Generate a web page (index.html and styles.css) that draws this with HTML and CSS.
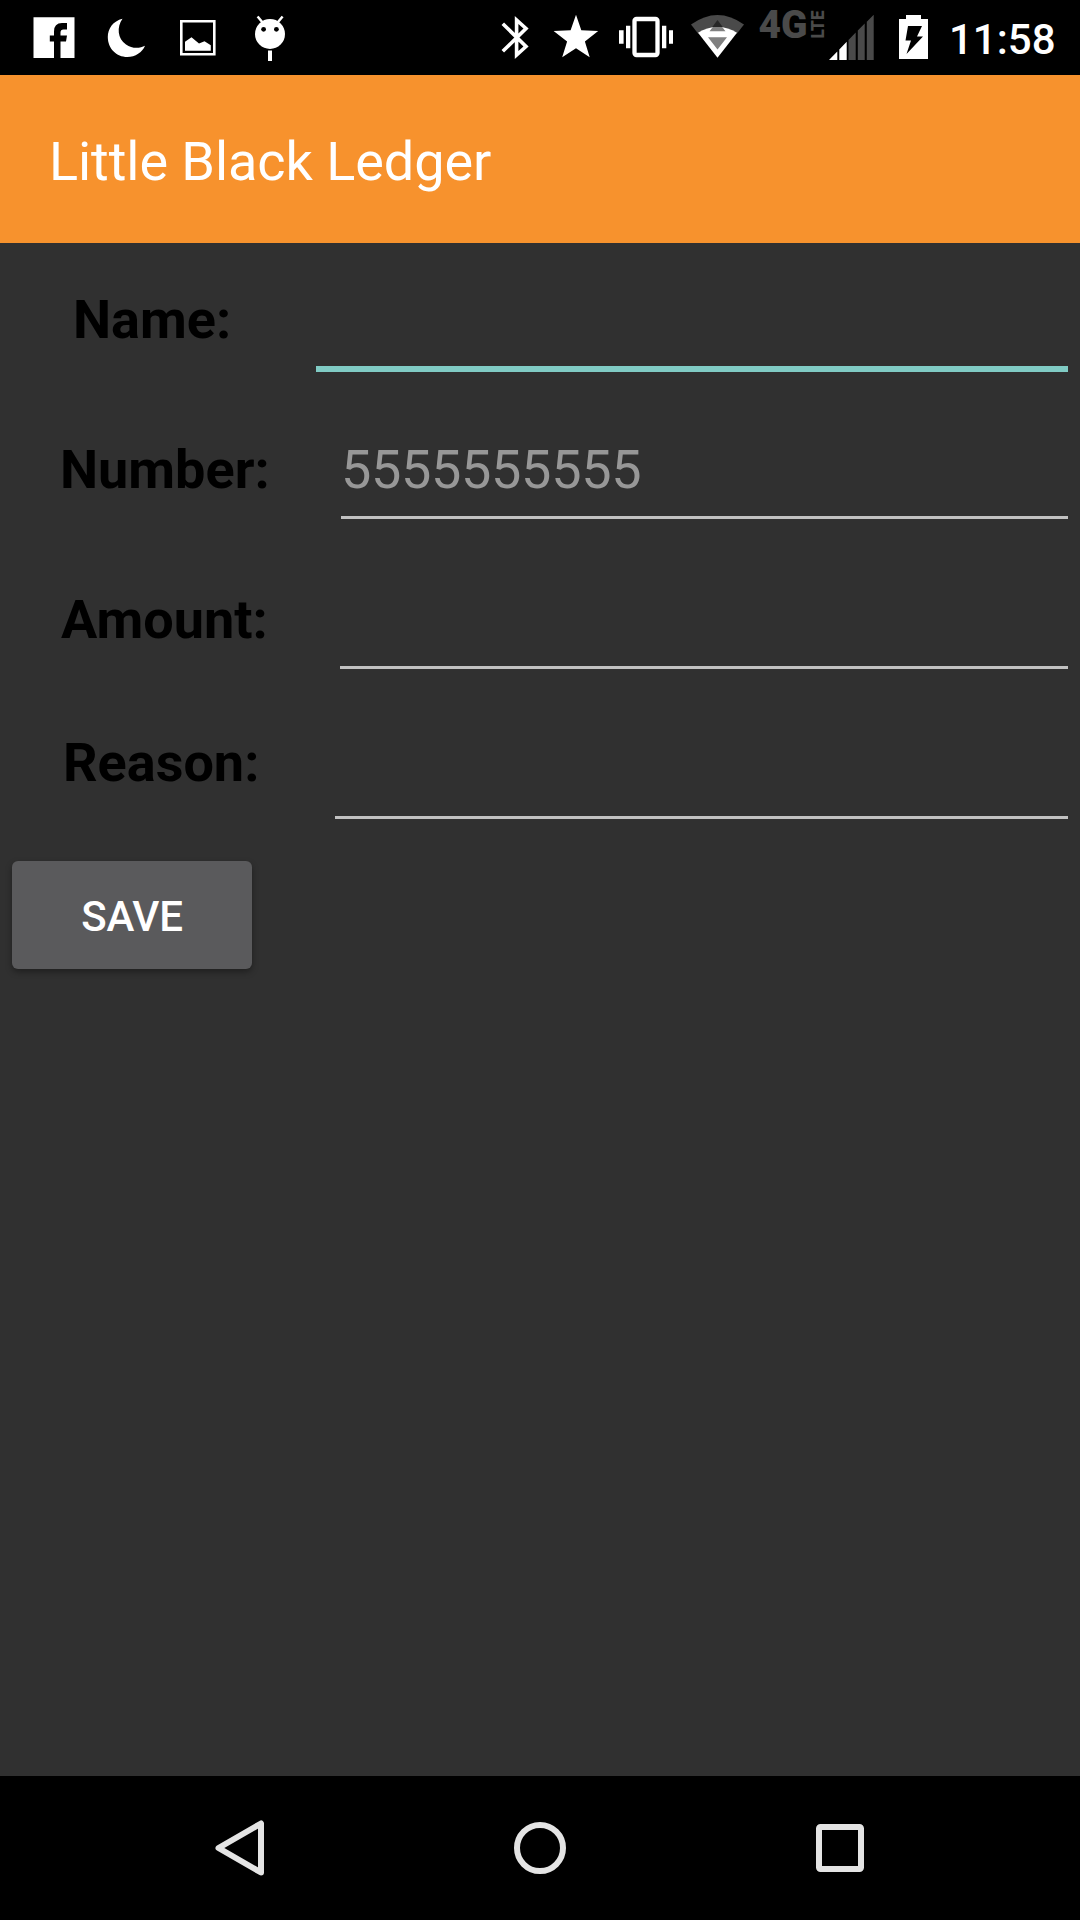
FILE: index.html
```
<!DOCTYPE html>
<html lang="en">
<head>
<meta charset="utf-8">
<title>Little Black Ledger</title>
<link rel="stylesheet" href="styles.css">
</head>
<body>
<div class="screen">
  <header class="status-bar">
    <div class="notifications">
      <svg width="90" height="75" viewBox="0 0 90 75"><path fill="#fff" d="M33.5 17.3h41V58H60.500V41.500h5.500l1-6h-6.500v-3q0-3 3-3H67v-6.500h-5q-8 0-8 8.500v4h-4.200v6H54V58H33.500z"/></svg>
      <svg width="70" height="75" viewBox="90 0 70 75"><path fill="#fff" d="M122.500 18.700C113 21 107.800 28.500 107.800 37c0 11.500 8.700 20 19.500 20 8 0 15-4.500 17.700-11.200C140 48.500 132 49 126 44.500c-8.500-6-9.500-17.500-3.500-25.800z"/></svg>
      <svg width="75" height="75" viewBox="160 0 75 75"><path fill="none" stroke="#fff" stroke-width="2.600" d="M181.300 21.300h33v33h-33z"/><path fill="#fff" d="M185 50.700v-9l6.500-4.400 7.500 6.200 5.500-2.300 6.300 4v5.500z"/></svg>
      <svg width="70" height="75" viewBox="235 0 70 75"><g stroke="#fff"><path stroke-width="2.500" d="M257.600 16.500l5 6m20-6l-5 6"/><path stroke-width="4" d="M270 50.500V61"/></g><circle cx="270" cy="34" r="15" fill="#fff"/><circle cx="263.600" cy="29.300" r="2.400"/><circle cx="276.400" cy="29.300" r="2.400"/></svg>
    </div>
    <div class="system">
      <svg width="55" height="75" viewBox="490 0 55 75"><path fill="none" stroke="#fff" stroke-width="3.600" d="M502.800 23.800L526 46.500 516.600 55V20l9.400 8.500L502.800 51.300"/></svg>
      <svg width="65" height="75" viewBox="545 0 65 75"><path fill="#fff" d="M576 14.700l5.300 15.600 16.900.7-13.300 10.500 4.800 15.700L576 48.300l-13.800 8.900 4.900-15.700L553.600 31l17-.7z"/></svg>
      <svg width="72" height="75" viewBox="610 0 72 75"><rect x="634.500" y="19" width="23" height="36" rx="2" fill="none" stroke="#fff" stroke-width="4.300"/><path fill="#fff" d="M619 30.300h4.600v13.500H619zm7-4.600h4.300v22.500H626zm36 0h4.300v22.500H662zm7 4.600h4v13.500h-4z"/></svg>
      <svg width="73" height="75" viewBox="682 0 73 75"><path fill="#4a4a4a" d="M691 24.500Q717.500 5.500 744 24.500L737 33.500H698z"/><path fill="#fff" d="M698 32.700Q707 27 717.500 27T737 32.700L717.500 57.700z"/><path fill="#808080" d="M709.500 31.300l3.300-4.300h9.400l3.300 4.300zm-1.500 5.900h19l-9.500 12.300z"/><path fill="#262626" d="M717.500 20l5.200 7h-10.400z"/></svg>
      <svg class="network" width="74" height="75" viewBox="755 0 74 75"><text x="758.500" y="38" textLength="49" lengthAdjust="spacingAndGlyphs" font-size="38">4G</text><text transform="translate(823.500 38.500) rotate(-90)" textLength="28" lengthAdjust="spacingAndGlyphs" font-size="18.500">LTE</text></svg>
      <svg width="56" height="75" viewBox="829 0 56 75"><path fill="#fff" d="M829 60l8.300-8.500V60zm10.300 0V49.500l7.400-7.700V60z"/><path fill="#4a4a4a" d="M848.500 60V40l7.200-7.500V60zm9.300 0V30.600l6.900-7V60zm9 0V21.700l6.900-7V60z"/></svg>
      <svg width="55" height="75" viewBox="885 0 55 75"><path fill="#fff" d="M899 19h7v-4h15v4h7v40h-29z"/><path d="M908 26h14l-5 10.500h6L906.500 54l4.500-13.500h-5.500z"/></svg>
      <span class="clock">11:58</span>
    </div>
  </header>

  <div class="toolbar"><h1 class="title">Little Black Ledger</h1></div>

  <main class="form">
    <div class="row name">
      <label class="label" for="name">Name:</label>
      <input class="field focused" id="name" type="text">
    </div>
    <div class="row number">
      <label class="label" for="number">Number:</label>
      <input class="field" id="number" type="tel" placeholder="5555555555">
    </div>
    <div class="row amount">
      <label class="label" for="amount">Amount:</label>
      <input class="field" id="amount" type="text">
    </div>
    <div class="row reason">
      <label class="label" for="reason">Reason:</label>
      <input class="field" id="reason" type="text">
    </div>
    <button class="save" type="button">SAVE</button>
  </main>

  <nav class="nav-bar">
    <svg width="60" height="60" viewBox="0 0 60 60"><path d="M51 5.500v49L8.500 30z"/></svg>
    <svg width="60" height="60" viewBox="0 0 60 60"><circle cx="30" cy="30" r="23"/></svg>
    <svg width="60" height="60" viewBox="0 0 60 60"><rect x="9" y="9" width="42" height="42" rx="1.500"/></svg>
  </nav>
</div>
</body>
</html>
```
FILE: styles.css
```
* {
  box-sizing: border-box;
}

body {
  margin: 0;
  background: #303030;
  font-family: Roboto, sans-serif;
}

.screen {
  display: flex;
  flex-direction: column;
  width: 1080px;
  height: 1920px;
  overflow: hidden;
}

svg {
  display: block;
  flex: none;
}

.status-bar {
  display: flex;
  justify-content: space-between;
  height: 75px;
  background: #000;
}

.notifications,
.system {
  display: flex;
}

.system {
  width: 590px;
}

.network {
  fill: #4a4a4a;
  font-family: Roboto, sans-serif;
  font-weight: 900;
}

.clock {
  padding: 15px 0 0 9px;
  color: #fff;
  font-size: 42px;
  font-weight: 500;
  line-height: 50px;
}

.toolbar {
  height: 168px;
  padding: 55px 48px 0 49px;
  background: #f7922d;
}

.title {
  margin: 0;
  color: #fff;
  font-size: 54px;
  font-weight: 400;
  line-height: 63px;
  letter-spacing: -0.05px;
}

.form {
  flex: 1;
  background: #303030;
}

.row {
  display: flex;
  height: 150px;
  padding: 0 12px 24px 0;
}

.label {
  flex: none;
  width: 341px;
  padding: 45px 0 0 60px;
  color: #000;
  font-size: 54px;
  font-weight: 700;
  line-height: 63px;
}

.name {
  padding-bottom: 21px;
}

.name .label {
  width: 316px;
  padding-left: 73px;
}

.amount .label {
  width: 340px;
  padding-left: 61px;
}

.reason .label {
  width: 335px;
  padding: 38px 0 0 63px;
}

.field {
  flex: 1;
  min-width: 0;
  padding: 29px 0 0;
  border: 0;
  border-bottom: 3px solid #c1c1c1;
  border-radius: 0;
  outline: 0;
  background: transparent;
  color: #fff;
  font-family: inherit;
  font-size: 54px;
  letter-spacing: -0.33px;
}

.field::placeholder {
  color: #979797;
  opacity: 1;
}

.focused {
  border-bottom: 6px solid #80cbc4;
}

.save {
  display: block;
  width: 240px;
  height: 108px;
  margin: 18px 0 0 12px;
  padding: 3px 0 0;
  border: 0;
  border-radius: 6px;
  background: #5a5a5c;
  box-shadow: 0 3px 6px rgba(0, 0, 0, 0.35);
  color: #fff;
  font-family: inherit;
  font-size: 42px;
  font-weight: 500;
  letter-spacing: -0.2px;
}

.nav-bar {
  display: flex;
  justify-content: center;
  align-items: center;
  gap: 240px;
  height: 144px;
  background: #000;
}

.nav-bar svg {
  fill: none;
  stroke: #e4e4e4;
  stroke-width: 6;
  stroke-linejoin: round;
}
```
